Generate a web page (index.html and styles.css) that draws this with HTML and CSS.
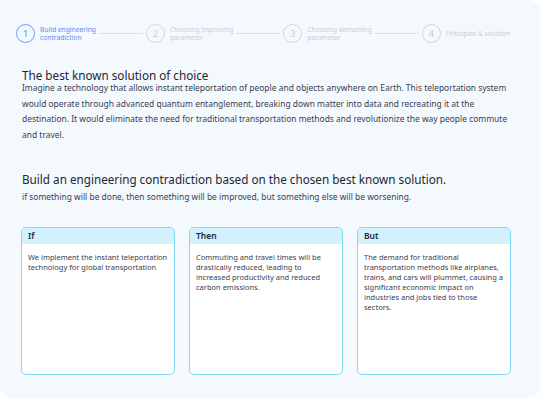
FILE: index.html
```html
<!DOCTYPE html>
<html lang="en">
<head>
    <meta charset="UTF-8">
    <meta name="viewport" content="width=device-width, initial-scale=1.0">
    <title>Engineering Contradiction</title>
    <link rel="stylesheet" href="styles.css">
</head>
<body>

<div class="panel">
    <div class="stepper">
        <div class="step active">
            <span class="step-num">1</span>
            <span class="step-label">Build engineering<br>contradiction</span>
        </div>
        <div class="step-line"></div>
        <div class="step">
            <span class="step-num">2</span>
            <span class="step-label">Choosing improving<br>parameter</span>
        </div>
        <div class="step-line"></div>
        <div class="step">
            <span class="step-num">3</span>
            <span class="step-label">Choosing worsening<br>parameter</span>
        </div>
        <div class="step-line"></div>
        <div class="step">
            <span class="step-num">4</span>
            <span class="step-label">Principles &amp; solution</span>
        </div>
    </div>

    <div class="section">
        <h2>The best known solution of choice</h2>
        <p class="lead">Imagine a technology that allows instant teleportation of people and objects anywhere on Earth. This teleportation system would operate through advanced quantum entanglement, breaking down matter into data and recreating it at the destination. It would eliminate the need for traditional transportation methods and revolutionize the way people commute and travel.</p>
    </div>

    <div class="section">
        <h2>Build an engineering contradiction based on the chosen best known solution.</h2>
        <p class="hint">if something will be done, then something will be improved, but something else will be worsening.</p>
    </div>

    <div class="cards">
        <div class="card">
            <div class="card-head">If</div>
            <div class="card-body">We implement the instant teleportation technology for global transportation</div>
        </div>
        <div class="card">
            <div class="card-head">Then</div>
            <div class="card-body">Commuting and travel times will be drastically reduced, leading to increased productivity and reduced carbon emissions.</div>
        </div>
        <div class="card">
            <div class="card-head">But</div>
            <div class="card-body">The demand for traditional transportation methods like airplanes, trains, and cars will plummet, causing a significant economic impact on industries and jobs tied to those sectors.</div>
        </div>
    </div>
</div>

</body>
</html>
```

FILE: styles.css
```css
body {
    font-family: "Noto Sans", "Open Sans", sans-serif;
    margin: 0;
    padding: 0;
    background-color: #fff;
    color: #222734;
}
.panel {
    background-color: #f4f9fe;
    width: 540px;
    height: 398px;
    border-radius: 0 12px 12px 12px;
    padding: 24px 22px 0 22px;
    box-sizing: border-box;
}

/* stepper */
.stepper {
    display: flex;
    align-items: center;
    margin-left: -6px;
}
.step {
    display: flex;
    align-items: center;
    gap: 5px;
    color: #c9cdd5;
    flex-shrink: 0;
    white-space: nowrap;
}
.step-num {
    width: 17px;
    height: 17px;
    border: 1px solid #d3d7de;
    border-radius: 50%;
    display: flex;
    align-items: center;
    justify-content: center;
    font-size: 9px;
}
.step-label {
    font-size: 6.7px;
    line-height: 8px;
}
.step.active {
    color: #5b8ef2;
}
.step.active .step-num {
    border-color: #6b9df3;
}
.step-line {
    width: 44px;
    height: 1px;
    background-color: #dde1e7;
    margin: 0 3px;
    flex-shrink: 0;
}

/* text sections */
.section {
    margin-top: 24px;
}
.section + .section {
    margin-top: 29px;
}
h2 {
    font-size: 11.7px;
    font-weight: 400;
    margin: 0;
    line-height: 17px;
}
.lead {
    font-size: 8.45px;
    line-height: 15.5px;
    margin: -4px 0 0;
    color: #3a4050;
}
.hint {
    font-size: 8.45px;
    line-height: 12px;
    margin: 3px 0 0;
    color: #3a4050;
}

/* cards */
.cards {
    display: flex;
    gap: 14px;
    margin-top: 24px;
    margin-left: -1px;
}
.card {
    width: 154px;
    height: 148px;
    box-sizing: border-box;
    border: 1px solid #7fd9f7;
    border-radius: 5px;
    background-color: #fff;
    overflow: hidden;
}
.card-head {
    background-color: #d3f1fc;
    font-size: 8.5px;
    font-weight: 600;
    padding: 3px 6px;
    height: 16px;
    box-sizing: border-box;
    line-height: 10px;
}
.card-body {
    font-size: 7.5px;
    line-height: 10px;
    padding: 8px 6px;
    color: #3a4050;
}
```
